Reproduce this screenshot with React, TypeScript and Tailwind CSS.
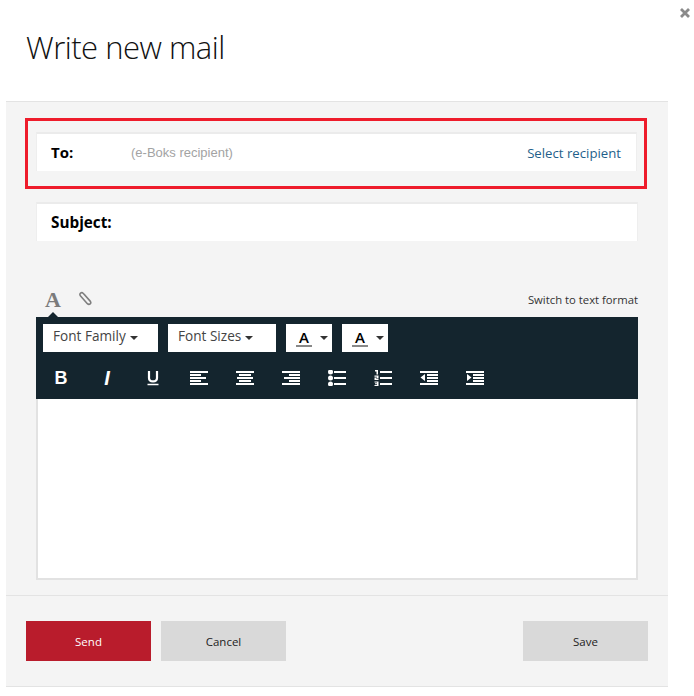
import React from "react";

const Bars = ({ rows }: { rows: [number, number][] }) => (
  <svg width="18" height="16" viewBox="0 0 18 16" fill="#fff" className="block">
    {rows.map(([x, w], i) => (
      <rect key={i} x={x} y={1 + i * 3} width={w} height="2" />
    ))}
  </svg>
);

const Caret = () => (
  <span className="block w-0 h-0 border-x-[4px] border-x-transparent border-t-[4px] border-t-[#333]" />
);

const IconCell = ({ children }: { children: React.ReactNode }) => (
  <div className="w-[46px] h-[46px] flex items-center justify-center">{children}</div>
);

const ColorBtn = () => (
  <div className="w-[46px] h-[28px] bg-white flex items-center pl-[10px] gap-[8px]">
    <span className="relative w-4 h-[28px] flex justify-center text-[15px] leading-[27px] font-semibold text-black">
      A
      <span className="absolute left-0 bottom-[5px] w-4 h-[2px] bg-[#888]" />
    </span>
    <Caret />
  </div>
);

const ListIcon = () => (
  <svg width="18" height="16" viewBox="0 0 18 16" fill="#fff" className="block">
    <circle cx="2.500" cy="2" r="2.500" />
    <circle cx="2.500" cy="8" r="2.500" />
    <circle cx="2.500" cy="14" r="2.500" />
    <rect x="6" y="1" width="12" height="2" />
    <rect x="6" y="7" width="12" height="2" />
    <rect x="6" y="13" width="12" height="2" />
  </svg>
);

const NumIcon = () => (
  <svg width="18" height="16" viewBox="0 0 18 16" fill="#fff" className="block">
    <path d="M1 0h3v4.500h-1.500v-3h-1.500z" />
    <path d="M0.500 5.500h4v3h-2.500v0.500h2.500v1h-4v-2.500h2.500v-0.800h-2.500z" />
    <path d="M0.500 11.500h4v4.500h-4v-1h2.500v-0.800h-2v-0.900h2v-0.800h-2.500z" />
    <rect x="6" y="1" width="12" height="2" />
    <rect x="6" y="7" width="12" height="2" />
    <rect x="6" y="13" width="12" height="2" />
  </svg>
);

const IndentIcon = ({ out }: { out?: boolean }) => (
  <svg width="18" height="16" viewBox="0 0 18 16" fill="#fff" className="block">
    <rect x="0" y="1" width="18" height="2" />
    <rect x="7" y="4" width="11" height="2" />
    <rect x="7" y="7" width="11" height="2" />
    <rect x="7" y="10" width="11" height="2" />
    <rect x="0" y="13" width="18" height="2" />
    {out ? <path d="M5 4v7L0.500 7.500z" /> : <path d="M1 4v7l4.500-3.500z" />}
  </svg>
);

const Btn = ({ label, red }: { label: string; red?: boolean }) => (
  <button
    className={`w-[125px] h-[40px] pt-px text-[11.500px] ${red ? "bg-[#b91c2c] text-white" : "bg-[#d9d9d9] text-[#222]"}`}
  >
    {label}
  </button>
);

export default function App() {
  return (
    <div className="relative w-[694px] h-[696px] bg-white overflow-hidden font-['Open_Sans',sans-serif]">
      <svg className="absolute left-[679px] top-[7px]" width="12" height="12" viewBox="0 0 12 12">
        <path d="M2 2l8 8M10 2l-8 8" stroke="#8a8a8a" strokeWidth="2.800" />
      </svg>

      <div className="h-[101px] pl-[26px] pt-[25px]">
        <h1 className="text-[31px] leading-[44px] font-light text-[#111] tracking-[-0.5px]">Write new mail</h1>
      </div>

      <div className="ml-[6px] w-[662px] h-[586px] bg-[#f4f4f4] border-y border-[#e3e3e3] flex flex-col">
        <div className="h-[494px] border-b border-[#e3e3e3] pl-[19px] pt-[16px]">
          <div className="w-[622px] h-[71px] border-[3px] border-[#ee1c2b] pl-[8px] pr-[7px] pt-[11px]">
            <div className="h-[39px] bg-white border-t-2 border-t-[#ebebeb] border-x border-x-[#eeeeee] flex items-center pl-[14px] pr-[15px]">
              <span className="w-[80px] text-[15px] leading-[18px] font-bold text-black -mt-[2px]">To:</span>
              <span className="text-[13px] text-[#a3a3a3] font-['Liberation_Sans',sans-serif] flex-1">(e-Boks recipient)</span>
              <span className="text-[13.200px] leading-[18px] text-[#1f5f8b] mt-[1px]">Select recipient</span>
            </div>
          </div>

          <div className="ml-[11px] mt-[13px] w-[602px] h-[39px] bg-white border-t-2 border-t-[#ebebeb] border-x border-x-[#eeeeee] flex items-center pl-[14px]">
            <span className="text-[15.300px] leading-[18px] font-bold text-black -mt-[2px]">Subject:</span>
          </div>

          <div className="ml-[11px] mt-[40px] w-[602px] h-[36px] relative flex items-start justify-between">
            <div className="flex items-start pl-[9px] pt-[6px] gap-[17px]">
              <span className="font-['Liberation_Serif',serif] font-bold text-[22px] leading-[25px] text-[#7b7b7b]">A</span>
              <svg width="15" height="15" viewBox="0 0 16 16" fill="none" stroke="#7f7f7f" strokeWidth="1.700" className="mt-[4px]">
                <path d="M13.500 11.500L5.500 2.500C3.800 0.500 0.800 3 2.500 5L10 13.500C12 15.500 15 13 13 10.800L7 4" />
              </svg>
            </div>
            <span className="text-[11.300px] leading-[14px] text-[#333] mt-[12px]">Switch to text format</span>
            <span className="absolute left-[12px] bottom-0 w-0 h-0 border-x-[5px] border-x-transparent border-b-[5px] border-b-[#14252e]" />
          </div>

          <div className="ml-[11px] w-[602px] h-[82px] bg-[#14252e] pl-[7px] pt-[7px]">
            <div className="flex gap-[10px] h-[28px]">
              <div className="w-[115px] h-[28px] bg-white flex items-center pl-[10px] gap-[4px] text-[13.600px] text-[#444]">
                <span className="leading-[18px] mb-[5px]">Font Family</span> <Caret />
              </div>
              <div className="w-[108px] h-[28px] bg-white flex items-center pl-[10px] gap-[4px] text-[13.600px] text-[#444]">
                <span className="leading-[18px] mb-[5px]">Font Sizes</span> <Caret />
              </div>
              <ColorBtn />
              <ColorBtn />
            </div>
            <div className="flex -ml-[5px] mt-[3px]">
              <IconCell>
                <span className="text-[18px] font-black text-white font-['Liberation_Sans',sans-serif]">B</span>
              </IconCell>
              <IconCell>
                <span className="text-[20px] font-black italic text-white font-['Liberation_Sans',sans-serif]">I</span>
              </IconCell>
              <IconCell>
                <svg width="14" height="16" viewBox="0 0 14 16" fill="none" stroke="#fff" className="block">
                  <path d="M3 1v7c0 4.500 8 4.500 8 0V1" strokeWidth="2.200" />
                  <path d="M1.500 14.500h11" strokeWidth="1.500" />
                </svg>
              </IconCell>
              <IconCell><Bars rows={[[0, 18], [0, 11], [0, 16], [0, 11], [0, 18]]} /></IconCell>
              <IconCell><Bars rows={[[0, 18], [3, 12], [1, 16], [3, 12], [0, 18]]} /></IconCell>
              <IconCell><Bars rows={[[0, 18], [7, 11], [2, 16], [7, 11], [0, 18]]} /></IconCell>
              <IconCell><ListIcon /></IconCell>
              <IconCell><NumIcon /></IconCell>
              <IconCell><IndentIcon out /></IconCell>
              <IconCell><IndentIcon /></IconCell>
            </div>
          </div>

          <div className="ml-[11px] w-[602px] h-[181px] bg-white border-x-2 border-b-2 border-[#e2e2e2]" />
        </div>

        <div className="flex-1 flex items-start pl-[20px] pt-[25px]">
          <Btn label="Send" red />
          <div className="ml-[10px]"><Btn label="Cancel" /></div>
          <div className="ml-[237px]"><Btn label="Save" /></div>
        </div>
      </div>
    </div>
  );
}
